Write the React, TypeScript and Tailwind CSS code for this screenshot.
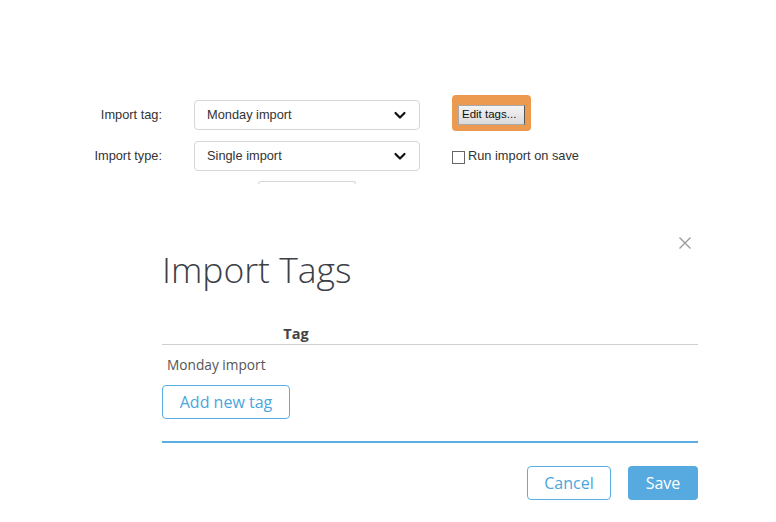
import React from 'react';

const Chevron = () => (
    <svg width="14" height="14" viewBox="0 0 14 14" fill="none">
        <path d="M2.5 5 L7 9.5 L11.5 5" stroke="#111" strokeWidth="2.2" strokeLinecap="round" strokeLinejoin="round" />
    </svg>
);

const SelectBox = ({ value }: { value: string }) => (
    <div className="ml-[32px] flex h-[30px] w-[226px] items-center justify-between rounded-[4px] border border-[#d6d6d6] bg-white pl-[12px] pr-[12px] text-[12.8px] text-[#333]">
        <span>{value}</span>
        <Chevron />
    </div>
);

export default function App() {
    return (
        <div className="relative h-[522px] w-[776px] overflow-hidden bg-white">
            {/* legacy import form */}
            <div className="pt-[100px] font-['Liberation_Sans',Arial,sans-serif]">
                <div className="flex h-[30px] items-center">
                    <label className="w-[162px] text-right text-[12.8px] text-[#333]">Import tag:</label>
                    <SelectBox value="Monday import" />
                    <div className="relative -top-[2px] ml-[32px] rounded-[4px] border-[5px] border-[#ec9a4f] bg-[#ec9a4f] p-px">
                        <button className="h-[20px] w-[67px] border border-[#a9a9a9] border-r-[#555] bg-gradient-to-b from-[#f4f4f4] to-[#dadada] pl-[3px] text-left text-[11.5px] leading-none text-[#111]">
                            Edit tags...
                        </button>
                    </div>
                </div>
                <div className="mt-[11px] flex h-[30px] items-center">
                    <label className="w-[162px] text-right text-[12.8px] text-[#333]">Import type:</label>
                    <SelectBox value="Single import" />
                    <div className="ml-[32px] flex items-center gap-[3px] text-[12.8px] text-[#333]">
                        <span className="mt-[2px] h-[13px] w-[13px] border border-[#666] bg-white" />
                        <span>Run import on save</span>
                    </div>
                </div>
                <div className="ml-[258px] mt-[10px] h-[3px] w-[98px] rounded-t-[5px] border-x border-t border-[#d6d6d6]" />
            </div>

            {/* Import Tags dialog */}
            <div className="relative ml-[162px] mt-[51px] w-[536px] font-['Open_Sans',sans-serif]">
                <button className="absolute right-[6px] top-[1px] text-[#999]">
                    <svg width="14" height="14" viewBox="0 0 14 14">
                        <path d="M1.5 1.5 L12.5 12.5 M12.5 1.5 L1.5 12.5" stroke="#9a9a9a" strokeWidth="1.4" />
                    </svg>
                </button>
                <h2 className="pt-[16px] text-[35.5px] font-light leading-[36px] text-[#3b4047]">Import Tags</h2>

                <div className="mt-[37px] flex border-b border-[#cfcfcf]">
                    <div className="w-[268px] text-center text-[14.5px] font-bold leading-[20px] text-[#444]">Tag</div>
                </div>
                <div className="mt-[10px] pl-[5px] text-[13.7px] text-[#555]">Monday import</div>
                <button className="mt-[9px] h-[34px] w-[128px] rounded-[4px] border border-[#5aaee0] bg-white text-[16px] text-[#4aa6dc]">
                    Add new tag
                </button>

                <div className="mt-[22px] h-[2px] bg-[#5aaee0]" />

                <div className="mt-[23px] flex justify-end gap-[17px]">
                    <button className="h-[34px] w-[84px] rounded-[4px] border border-[#5aaee0] bg-white text-[16px] text-[#4aa6dc]">
                        Cancel
                    </button>
                    <button className="h-[34px] w-[70px] rounded-[4px] bg-[#56aadf] text-[16px] text-white">
                        Save
                    </button>
                </div>
            </div>
        </div>
    );
}
